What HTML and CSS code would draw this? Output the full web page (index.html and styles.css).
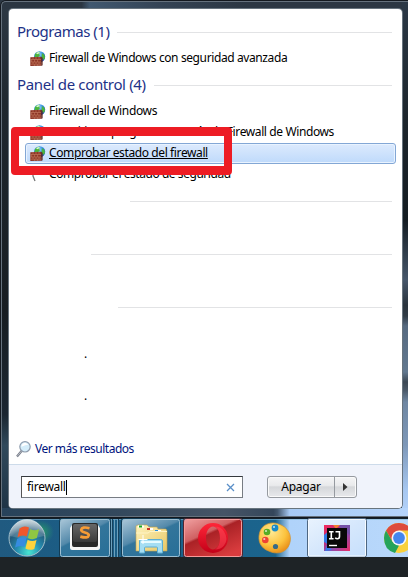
FILE: index.html
```html
<!DOCTYPE html>
<html lang="es">
<head>
<meta charset="utf-8">
<title>Menú Inicio</title>
<link rel="stylesheet" href="styles.css">
</head>
<body>
<svg class="defs" width="0" height="0">
  <defs>
    <radialGradient id="globe" cx=".4" cy=".3" r=".8"><stop offset="0" stop-color="#a9dcff"/><stop offset=".5" stop-color="#318ee0"/><stop offset="1" stop-color="#1238a0"/></radialGradient>
    <symbol id="fw" viewBox="0 0 16 16">
      <circle cx="9.6" cy="5.8" r="5.6" fill="url(#globe)"/>
      <path d="M5 3q2-2.500 5-2.300l-1 2 1 1.600-2 2H4.500zM12 2l2.500 2 .5 3-2 2-1.500-3z" fill="#4bb53c"/>
      <path d="M6 2.500q2-1.700 4-1.300l-2 2z" fill="#d8f7d0"/>
      <path d="M.3 6.200l10.900-.5v9L.3 15z" fill="#8d3526"/>
      <path d="M.5 8.500h10.500M.5 11h10.500M.5 13.200h10.500M3 6.200v2.300M6 6v2.500M9 6v2.500M1.700 8.500V11M4.600 8.500V11M7.600 8.500V11M3 11v2.200M6 11v2.200M9 11v2.200M4.600 13.200V15M7.600 13.200V15" stroke="#c67d63" stroke-width=".6"/>
      <path d="M11.200 5.700l1.400 1v7.500l-1.400.7z" fill="#5d2018"/>
    </symbol>
  </defs>
</svg>
<main class="desktop">
  <section class="frame">
    <div class="menu">
      <div class="results">
        <h2 class="group"><span class="g1">Programas (1)</span></h2>
        <div class="row"><svg class="ico"><use href="#fw"/></svg><span>Firewall de Windows con seguridad avanzada</span></div>
        <h2 class="group"><span class="g2">Panel de control (4)</span></h2>
        <div class="row"><svg class="ico"><use href="#fw"/></svg><span class="short">Firewall de Windows</span></div>
        <div class="row"><svg class="ico"><use href="#fw"/></svg><span>Permitir un programa a través de Firewall de Windows</span></div>
        <div class="row selected"><svg class="ico"><use href="#fw"/></svg><span>Comprobar estado del firewall</span></div>
        <div class="row"><svg class="ico" viewBox="0 0 16 16"><path d="M3 1v8l2 5" fill="none" stroke="#777" stroke-width="1.300"/></svg><span class="long">Comprobar el estado de seguridad</span></div>
        <div class="group blank b1"></div>
        <div class="row"></div>
        <div class="group blank b2"></div>
        <div class="row"></div>
        <div class="group blank b3"></div>
        <div class="row"></div>
        <div class="row dot"><span>.</span></div>
        <div class="row"></div>
        <div class="row dot"><span>.</span></div>
        <div class="more">
          <svg width="16" height="18" viewBox="0 0 16 18"><path d="M6 10.500L1 16.500" stroke="#777c88" stroke-width="2.200"/><path d="M6 10.500L1.500 15.800" stroke="#c5cad2" stroke-width=".8"/><circle cx="9" cy="6.800" r="5.200" fill="#d4edfa" stroke="#8f9cad" stroke-width="1.200"/><path d="M5.500 6q.5-3 4-3.200l3 2q-3 0-7 2z" fill="#fff"/></svg>
          <span>Ver más resultados</span>
        </div>
      </div>
      <div class="footer">
        <div class="search"><span>firewall</span><i class="caret"></i><svg class="clear" width="9" height="9" viewBox="0 0 9 9"><path d="M1 1l7 7M8 1L1 8" stroke="#5a8fc8" stroke-width="1.300"/></svg></div>
        <div class="power"><div class="shut">Apagar</div><div class="arrow"><svg width="5" height="8" viewBox="0 0 5 8"><path d="M0 0l4.500 4L0 8z" fill="#333"/></svg></div></div>
      </div>
    </div>
    <div class="marker"></div>
  </section>
  <nav class="taskbar">
    <svg class="bar" width="408" height="39" viewBox="0 518 408 39">
      <defs>
        <linearGradient id="bg" x1="0" x2="1"><stop offset="0" stop-color="#205a80"/><stop offset=".18" stop-color="#1b5d85"/><stop offset=".675" stop-color="#1b648d"/><stop offset=".71" stop-color="#b0d3fa"/><stop offset="1" stop-color="#b9d8fb"/></linearGradient>
        <linearGradient id="btn" x1="0" y1="0" x2=".7" y2="1"><stop offset="0" stop-color="#a9c6d8"/><stop offset=".48" stop-color="#5389aa"/><stop offset=".52" stop-color="#33759b"/><stop offset="1" stop-color="#2a7098"/></linearGradient>
        <linearGradient id="redbtn" x1="0" y1="0" x2=".7" y2="1"><stop offset="0" stop-color="#f0a0a0"/><stop offset=".42" stop-color="#cf6062"/><stop offset=".47" stop-color="#aa2226"/><stop offset="1" stop-color="#d93c3e"/></linearGradient>
        <radialGradient id="orb" cx=".55" cy=".9" r=".85"><stop offset="0" stop-color="#48e5d1"/><stop offset=".4" stop-color="#258db0"/><stop offset=".75" stop-color="#235a7a"/><stop offset="1" stop-color="#8aa3b2"/></radialGradient>
        <radialGradient id="glow"><stop offset="0" stop-color="#2bb05c" stop-opacity=".8"/><stop offset="1" stop-color="#2b9f69" stop-opacity="0"/></radialGradient>
        <linearGradient id="shine" x1="0" y1="0" x2="0" y2="1"><stop offset="0" stop-color="#fff" stop-opacity=".8"/><stop offset="1" stop-color="#fff" stop-opacity=".2"/></linearGradient>
        <linearGradient id="folder" x1="0" y1="0" x2="1" y2="1"><stop offset="0" stop-color="#fff3bd"/><stop offset="1" stop-color="#e6c765"/></linearGradient>
        <linearGradient id="opera" x1="0" y1="0" x2="0" y2="1"><stop offset="0" stop-color="#ff2638"/><stop offset="1" stop-color="#c30018"/></linearGradient>
        <radialGradient id="paint" cx=".4" cy=".3" r=".75"><stop offset="0" stop-color="#ffe994"/><stop offset=".6" stop-color="#fcc33e"/><stop offset="1" stop-color="#e78b16"/></radialGradient>
        <linearGradient id="ij" x1="0" y1="0" x2="1" y2="1"><stop offset="0" stop-color="#f32a5b"/><stop offset=".35" stop-color="#c42b74"/><stop offset=".55" stop-color="#7951bd"/><stop offset="1" stop-color="#ee2c64"/></linearGradient>
        <linearGradient id="key" x1="0" y1="0" x2="0" y2="1"><stop offset="0" stop-color="#676767"/><stop offset="1" stop-color="#3b3b3b"/></linearGradient>
        <linearGradient id="light" x1="0" y1="0" x2="1" y2="1"><stop offset="0" stop-color="#e9f3fe"/><stop offset=".5" stop-color="#d5e7fc"/><stop offset="1" stop-color="#c6dffc"/></linearGradient>
      </defs>
      <path fill="url(#bg)" d="M0 518h408v39H0z"/>
      <path fill="#101e29" d="M0 518h408v1H0z"/>
      <path stroke="#83b5d2" stroke-opacity=".6" d="M0 519.500h408"/>
      <!-- start orb -->
      <ellipse cx="41" cy="532" rx="13" ry="12" fill="url(#glow)"/>
      <circle cx="27" cy="538" r="18" fill="url(#orb)" stroke="#a3bfca" stroke-width="1"/>
      <path d="M10 536a17 17 0 0 1 34 0q-17 5-34 0z" fill="url(#shine)" opacity=".65"/>
      <path d="M19.500 528.500q4.500-3.500 9.500-1l-2.200 9q-4.600-2.300-9.300.8z" fill="#f0572b"/>
      <path d="M30.200 529q4 2.500 9 .1l-2.400 9q-4.500 2.200-8.900-.1z" fill="#8fc742"/>
      <path d="M17.200 538.800q4.700-2.800 9.300-.6l-2.200 8.700q-4.500-2.200-9.200.6z" fill="#368ce0"/>
      <path d="M27.600 539.700q4.300 2.400 8.900.2l-2.200 9q-4.700 2-8.900-.4z" fill="#fdd33c"/>
      <!-- editor -->
      <path d="M111.500 519v38M114.500 519v38M117.500 519v38" stroke="#6ba0bd"/><path d="M112.500 519v38M118.500 519v38" stroke="#17425e"/>
      <rect x="59.500" y="518.500" width="51" height="39" rx="2" fill="none" stroke="#123c55"/>
      <rect x="60.500" y="519.500" width="49" height="37" rx="2" fill="url(#btn)" stroke="#9dbfd2"/>
      <path d="M72 525h26l2 3v20q0 2-2 2H72q-2 0-2-2v-20z" fill="#f6f6f6"/><path d="M73 523h23q2 0 2 2v20q0 2-2 2H74q-2 0-2-2v-20q0-2 2-2z" fill="#292929"/>
      <rect x="73" y="524" width="24" height="18" rx="2" fill="url(#key)"/>
      <path d="M89.500 528.200q-7.500-2-8.300 1.600c-.5 3.400 7.800 2 7.600 5.500q-.6 3.500-8.500 1.300" fill="none" stroke="#f69c36" stroke-width="2.700"/>
      <!-- explorer -->
      <rect x="121.500" y="518.500" width="59" height="39" rx="2" fill="none" stroke="#123c55"/>
      <rect x="122.500" y="519.500" width="57" height="37" rx="2" fill="url(#btn)" stroke="#9dbfd2"/>
      <path d="M136 551v-25l2-1h9l2 2h8l1 2h8l1 2v20z" fill="url(#folder)" stroke="#c3a24e" stroke-width=".6"/>
      <path d="M138 525.500h6v2h-6zM147 528h6v2h-6zM155 530h6v2h-6z" fill="#fff"/><path d="M139 525.500h3v2h-3z" fill="#16a626"/><path d="M147 528h3v2h-3z" fill="#cd3028"/><path d="M155 530h3v2h-3z" fill="#298fdd"/>
      <path d="M136 533h12l2-1.500h17" stroke="#fff4c5" fill="none"/>
      <path d="M139.500 553v-12q0-1.500 2-1.500h19q2 0 2 1.500v12h-5v-5q0-1-1-1h-11q-1 0-1 1v5z" fill="#a5def3" stroke="#5caed3"/><path d="M141 542h20" stroke="#e6fbff" stroke-width="2"/>
      <path d="M143 535v9M138.500 539.500h9" stroke="#fff"/>
      <!-- opera -->
      <rect x="183.500" y="518.500" width="59" height="39" rx="2" fill="none" stroke="#512631"/>
      <rect x="184.500" y="519.500" width="57" height="37" rx="2" fill="url(#redbtn)" stroke="#f79a99"/>
      <path fill="url(#opera)" fill-rule="evenodd" d="M213 523a15 15 0 0 1 0 30a15 15 0 0 1 0-30zm0 3.500c-4 0-7 5-7 11.500s3 11.500 7 11.500 7-5 7-11.500-3-11.500-7-11.500z"/>
      <path d="M215 526.500q6 0 9 5 5 8 0 14-3 4-9 4 5-3 5-11.500t-5-11.500z" fill="#ff5360" opacity=".45"/>
      <!-- paint -->
      <path d="M259.500 533c2-9 12-12 19-9 10 3 14 12 11 20-3 9-13 11-21 7-8-3-11-10-9-18z" fill="url(#paint)" stroke="#d19332" stroke-width=".7"/>
      <circle cx="275" cy="528" r="3.400" fill="#188ac8"/><circle cx="267" cy="532" r="3.300" fill="#56ad25"/><circle cx="265.300" cy="540" r="3.300" fill="#ed4334"/><circle cx="275.500" cy="546.500" r="2.600" fill="#386a86"/>
      <g fill="#fff" opacity=".7"><circle cx="274" cy="527" r="1.100"/><circle cx="266" cy="531" r="1.100"/><circle cx="264.300" cy="539" r="1.100"/></g>
      <!-- ide -->
      <rect x="307.500" y="518.500" width="59" height="38.500" rx="2" fill="url(#light)" stroke="#4e6782"/>
      <rect x="308.500" y="519.500" width="57" height="36.500" rx="1" fill="none" stroke="#f5faff"/>
      <path fill="url(#ij)" d="M324 525h26v26h-26z"/><path d="M324 535v7l5 3v-14zM325 551l7-1-5-5z" fill="#327be8"/><path d="M337 525h13v10z" fill="#7452a8"/><path d="M333 525h7l-4 4z" fill="#f27d2e"/>
      <path fill="#080808" d="M327 528h20v20h-20z"/>
      <path d="M329 531.800h4.600M331.300 531.800v7M329 538.800h4.600M335.500 531.800h4v4.800q0 2.200-2 2.200-1.500 0-2.300-1" fill="none" stroke="#fff" stroke-width="1.600"/><path d="M329 545.500h8" stroke="#fff" stroke-width="1.400"/>
      <!-- chrome -->
      <circle cx="399" cy="538" r="15" fill="#f9d13c"/>
      <path d="M386 530.500a15 15 0 0 1 26 0H399l-6.500 11.300z" fill="#dd4b3e"/>
      <path d="M386 530.500l6.500 11.300 6.500 3.700-4 7.500Q384 550 384 538q0-4 2-7.500z" fill="#25a45b"/>
      <circle cx="399" cy="538" r="7.500" fill="#f5f5f5"/><circle cx="399" cy="538" r="5.900" fill="#4486ee"/>
    </svg>
  </nav>
</main>
</body>
</html>
```

FILE: styles.css
```css
* { box-sizing: border-box; }
body {
  margin: 0;
  background: #1e2326;
  font: 12px/21px "Noto Sans", "Open Sans", sans-serif;
  color: #000;
}
.defs { position: absolute; }
.desktop { width: 408px; height: 577px; display: flex; flex-direction: column; overflow: hidden; }
.frame {
  position: relative;
  height: 518px;
  padding: 9px 6px 10px 9px;
  background:
    linear-gradient(90deg, #27425a 0, #34495d 30%, #465466 55%, #34465a 67%, #42566c 68%, #a7caf4 71%, #b5d4fb 100%) 0 508px / 100% 10px no-repeat,
    linear-gradient(#2c3947 0, #1d262d 120px, #141c22 220px, #2a3642 245px, #46566a 280px, #2a343d 305px, #313c46 316px, #566a80 326px, #62788f 372px, #3c4854 382px, #4a5867 390px, #6f87a2 402px, #7e98b8 445px, #a7c7f0 490px, #b5d4fb 518px) 402px 0 / 6px 100% no-repeat,
    linear-gradient(90deg, #2b3642 20%, #405870 22%, #344354 40%, #2c3743 60%) 0 0 / 100% 9px no-repeat,
    linear-gradient(#2d3945 0, #20282f 20%, #171d22 60%, #1b2631 80%, #30495b 86%, #1c3042 100%);
}
.frame::before {
  content: "";
  position: absolute;
  inset: 1px -1px 1px 1px;
  border: 1px solid #65717d;
  border-right: 0;
  border-radius: 5px 0 0 0;
  box-shadow: 0 0 0 1px #14191f;
}
.menu {
  position: relative;
  height: 499px;
  display: flex;
  flex-direction: column;
  border-radius: 4px;
  overflow: hidden;
  background: #fff;
  box-shadow: 0 0 0 1px #68747e;
}
.results { height: 455px; padding: 7px 7px 0 8px; }
.group {
  height: 32px;
  margin: 0 3px 0 0;
  display: flex;
  align-items: center;
  font: 400 15px/30px "Noto Sans", "Open Sans", sans-serif;
  color: #1e3287;
  white-space: nowrap;
}
.group span { height: 32px; }
.group::after { content: ""; flex: 1; height: 1px; margin-left: 8px; background: #e2e3e5; }
.g1 { width: 92px; letter-spacing: -.48px; }
.g2 { width: 129px; letter-spacing: -.36px; }
.blank::after { margin-left: 0; }
.b1 { padding-left: 113px; }
.b2 { padding-left: 74px; }
.b3 { padding-left: 101px; }
.row {
  height: 21px;
  padding: 0 0 0 13px;
  display: flex;
  align-items: center;
  white-space: nowrap;
  letter-spacing: -.39px;
}
.row span { height: 21px; line-height: 19px; }
.row .short { letter-spacing: -.34px; }
.row .long { letter-spacing: -.45px; }
.ico { width: 16px; height: 16px; flex: none; margin-right: 3px; }
.selected {
  margin-left: 8px;
  margin-right: -1px;
  padding-left: 4px;
  border: 1px solid #83a7d5;
  border-radius: 3px;
  background: linear-gradient(#dceafd, #bfdafb);
  box-shadow: inset 0 0 0 1px #e9f3ff;
  text-decoration: underline;
}
.dot { padding-left: 67px; }
.more {
  height: 32px;
  margin-top: 26px;
  display: flex;
  align-items: center;
  gap: 3px;
  color: #00137d;
  letter-spacing: -.5px;
}
.more svg { margin-left: -1px; }
.more span { height: 23px; }
.footer {
  height: 44px;
  padding: 11px 45px 10px 12px;
  display: flex;
  justify-content: space-between;
  background: #f0f3fb;
  border-top: 1px solid #cddbea;
}
.search {
  width: 222px;
  height: 22px;
  padding: 0 7px 0 5px;
  display: flex;
  align-items: center;
  background: #fff;
  border: 1px solid #777c83;
  border-top-color: #34383d;
  border-left-color: #555;
  letter-spacing: -.27px;
}
.search span { height: 22px; }
.caret { width: 1px; height: 15px; background: #000; }
.clear { margin-left: auto; }
.power {
  width: 90px;
  height: 22px;
  display: flex;
  border: 1px solid #969aa0;
  border-radius: 3px;
  background: linear-gradient(#f5f5f6 0, #e9eaec 42%, #d5d7da 50%, #e8e9ec 100%);
  box-shadow: inset 0 0 0 1px #fafafa;
  line-height: 20px;
  letter-spacing: -.25px;
}
.shut { width: 67px; text-align: center; border-right: 1px solid #969aa0; }
.arrow { flex: 1; display: flex; align-items: center; justify-content: center; }
.marker {
  position: absolute;
  left: 11px;
  top: 127px;
  width: 221px;
  height: 48px;
  border: 9px solid #ed1c24;
  border-width: 9px 8px;
  border-radius: 4px;
}
.taskbar { height: 39px; }
.bar { display: block; }
```
